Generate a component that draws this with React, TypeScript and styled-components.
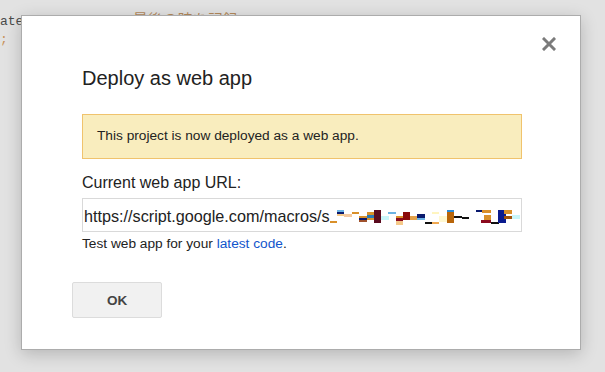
import React from "react";
import styled, { createGlobalStyle } from "styled-components";

const GlobalStyle = createGlobalStyle`
  * { box-sizing: border-box; }
  html, body { margin: 0; padding: 0; }
  body {
    background: #e2e2e2;
    font-family: "Liberation Sans", Arial, sans-serif;
    width: 605px;
    height: 372px;
    overflow: hidden;
  }
`;

// 뒤에 깔린 코드 에디터
const Editor = styled.div`
  position: relative;
  width: 605px;
  height: 372px;
  padding-top: 8px;
  font-family: "Liberation Mono", "DejaVu Sans Mono", monospace;
  font-size: 13px;
  line-height: 21px;
  white-space: pre;
  color: #5a5a5a;
`;

const CodeLine = styled.div`
  height: 21px;
`;

const Tok = styled.span<{ $c: string }>`
  color: ${(p) => p.$c};
`;

const Cjk = styled.span`
  font-family: "Noto Sans CJK JP", sans-serif;
  font-size: 15px;
  color: #b48a5c;
`;

// 모달
const Dialog = styled.div`
  position: absolute;
  left: 21px;
  top: 15px;
  width: 560px;
  height: 335px;
  background: #fff;
  border: 1px solid #acacac;
  box-shadow: 0 4px 16px rgba(0, 0, 0, 0.2);
  padding: 21px 58px 0 60px;
  display: flex;
  flex-direction: column;
  font-family: "Liberation Sans", Arial, sans-serif;
  white-space: normal;
  color: #222;
`;

const CloseRow = styled.div`
  display: flex;
  justify-content: flex-end;
  height: 14px;
  margin-right: -34px;
`;

const CloseBtn = styled.button`
  width: 14px;
  height: 14px;
  padding: 0;
  border: 0;
  background: none;
  cursor: pointer;
  display: flex;
`;

const Title = styled.h2`
  margin: 15px 0 0;
  font-size: 20px;
  line-height: 24px;
  font-weight: normal;
  color: #222;
`;

const Note = styled.div`
  margin-top: 24px;
  height: 45px;
  background: #f9edbe;
  border: 1px solid #f0c36d;
  padding: 13px 14px 0;
  font-size: 13.7px;
  line-height: 16px;
  color: #222;
`;

const Label = styled.div`
  margin-top: 14px;
  font-size: 16px;
  line-height: 20px;
  color: #222;
`;

const UrlField = styled.div`
  margin-top: 5px;
  width: 440px;
  height: 34px;
  border: 1px solid #d9d9d9;
  padding: 2px 1px 0;
  display: flex;
  align-items: center;
  font-size: 16.2px;
  overflow: hidden;
  white-space: nowrap;
  color: #222;
`;

const Scramble = styled.svg`
  flex: none;
  align-self: flex-start;
  margin-top: 5px;
`;

const Hint = styled.div`
  margin-top: 4px;
  font-size: 13.7px;
  line-height: 16px;
  color: #222;
`;

const Link = styled.a`
  color: #15c;
  text-decoration: none;
`;

const OkButton = styled.button`
  margin: 30px 0 0 -10px;
  width: 90px;
  height: 36px;
  background: #f1f1f1;
  border: 1px solid #dcdcdc;
  border-radius: 2px;
  font-family: "Liberation Sans", Arial, sans-serif;
  font-size: 13.5px;
  font-weight: bold;
  color: #444;
  padding: 0;
`;

// 가려진 URL 조각 (x, y, w, h, color) — svg 원점은 x=331, y=206
const blocks: [number, number, number, number, string][] = [
  [7, 4, 7, 2, "#6cb4e4"],
  [7, 6, 7, 2, "#0a1a6e"],
  [7, 8, 7, 2, "#f5c98a"],
  [0, 15, 7, 2, "#d9902a"],
  [14, 8, 8, 3, "#f4c9a0"],
  [22, 6, 7, 2, "#d9902a"],
  [29, 10, 8, 2, "#d9902a"],
  [29, 12, 8, 2, "#0a1a6e"],
  [29, 14, 8, 2, "#a0522d"],
  [37, 6, 7, 3, "#d9902a"],
  [37, 9, 7, 3, "#2a7ab8"],
  [37, 12, 7, 2, "#d9902a"],
  [44, 4, 7, 13, "#5a0a1e"],
  [51, 10, 8, 4, "#c8f6fa"],
  [58, 6, 8, 2, "#6cb4e4"],
  [66, 10, 7, 2, "#d9902a"],
  [66, 12, 7, 3, "#8b0a1e"],
  [66, 15, 7, 4, "#f5c98a"],
  [73, 6, 7, 8, "#8b0a0a"],
  [80, 10, 7, 4, "#e3a24a"],
  [87, 8, 8, 4, "#0a1a6e"],
  [87, 12, 8, 2, "#6cb4e4"],
  [95, 16, 7, 2, "#111"],
  [102, 16, 7, 2, "#f0a850"],
  [102, 6, 7, 2, "#fff5c0"],
  [109, 10, 8, 6, "#fff8d0"],
  [117, 4, 7, 2, "#2a8ad8"],
  [117, 6, 7, 11, "#b8650a"],
  [124, 10, 8, 2, "#111"],
  [132, 11, 7, 2, "#111"],
  [146, 4, 8, 2, "#0a1a6e"],
  [152, 4, 9, 3, "#d9902a"],
  [154, 9, 7, 5, "#d9902a"],
  [151, 14, 10, 3, "#8b0a1e"],
  [161, 16, 8, 2, "#111"],
  [168, 4, 8, 13, "#0a1a8e"],
  [174, 4, 8, 4, "#d9902a"],
  [174, 10, 8, 3, "#a0520a"],
  [182, 9, 8, 4, "#c8f6fa"],
];

export default function App() {
  return (
    <>
      <GlobalStyle />
      <Editor>
        <CodeLine>
          <Tok $c="#4a4a4a">ate</Tok>
          <Tok $c="#8a8a8a">())</Tok>
          {"        "}
          <Tok $c="#b48a5c">// </Tok>
          <Cjk>最後の時を記録</Cjk>
        </CodeLine>
        <CodeLine>
          <Tok $c="#c8925a">;</Tok>
        </CodeLine>

        <Dialog role="dialog">
          <CloseRow>
            <CloseBtn aria-label="Close">
              <svg width="14" height="14" viewBox="0 0 14 14">
                <path
                  d="M2 2L12 12M12 2L2 12"
                  stroke="#7b7b7b"
                  strokeWidth="3"
                  strokeLinecap="square"
                />
              </svg>
            </CloseBtn>
          </CloseRow>
          <Title>Deploy as web app</Title>
          <Note>This project is now deployed as a web app.</Note>
          <Label>Current web app URL:</Label>
          <UrlField>
            https://script.google.com/macros/s
            <Scramble width="190" height="20" viewBox="0 0 190 20">
              {blocks.map(([x, y, w, h, c], i) => (
                <rect key={i} x={x} y={y} width={w} height={h} fill={c} />
              ))}
            </Scramble>
          </UrlField>
          <Hint>
            Test web app for your <Link href="#">latest code</Link>.
          </Hint>
          <div>
            <OkButton>OK</OkButton>
          </div>
        </Dialog>
      </Editor>
    </>
  );
}
